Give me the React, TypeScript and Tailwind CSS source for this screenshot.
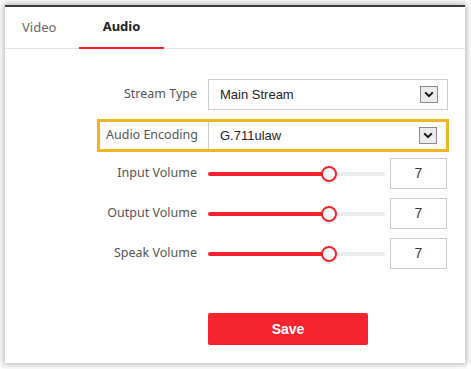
import { ReactNode } from 'react';

const labelFont = { fontFamily: '"Noto Sans", "Open Sans", sans-serif' };
const valueFont = { fontFamily: '"Liberation Sans", Arial, sans-serif' };

function Chevron() {
  return (
    <div className="w-[18px] h-[17px] border border-[#8a8a8a] bg-[#ececec] flex items-center justify-center">
      <svg width="10" height="7" viewBox="0 0 10 7">
        <path d="M1.2 1.4 L5 5.2 L8.8 1.4" fill="none" stroke="#111" strokeWidth="2" />
      </svg>
    </div>
  );
}

function Select({ value, className }: { value: string; className: string }) {
  return (
    <div className={`flex items-center justify-between pl-[11px] pr-[9px] text-[13px] text-[#222] ${className}`} style={valueFont}>
      <span>{value}</span>
      <Chevron />
    </div>
  );
}

function Label({ children }: { children: ReactNode }) {
  return (
    <div className="w-[192px] text-right text-[12.5px] text-[#555]" style={labelFont}>
      {children}
    </div>
  );
}

function VolumeRow({ label, value, top }: { label: string; value: number; top: string }) {
  return (
    <div className={`flex items-center h-[31px] ${top}`}>
      <Label>{label}</Label>
      <div className="ml-[11px] w-[177px] h-[4px] rounded-full bg-[#eeeeee] relative">
        <div className="h-full w-[121px] rounded-full bg-[#f5222d]" />
        <div className="absolute left-[113px] top-[-6px] w-[16px] h-[16px] rounded-full border-2 border-[#f5222d] bg-white" />
      </div>
      <div className="ml-[5px] w-[57px] h-[31px] border border-[#cccccc] flex items-center justify-center text-[14px] text-[#333]" style={valueFont}>
        {value}
      </div>
    </div>
  );
}

export default function App() {
  return (
    <div className="w-[471px] h-[369px] bg-white p-[5px] pb-[6px]">
      <div className="w-[460px] h-[358px] bg-white border-t-2 border-[#3c3c3c] shadow-[0_0_6px_2px_rgba(0,0,0,0.25)] flex flex-col">
        <div className="h-[42px] flex border-b border-[#e3e3e3] text-[13px]" style={labelFont}>
          <div className="pl-[17px] w-[74px] flex items-center text-[#666]">Video</div>
          <div className="w-[85px] flex items-center justify-center font-bold text-[#222] border-b-2 border-[#f5222d] mb-[-1px]">Audio</div>
        </div>

        <div className="flex items-center h-[31px] mt-[30px]">
          <Label>Stream Type</Label>
          <Select value="Main Stream" className="ml-[11px] w-[240px] h-[31px] border border-[#cccccc]" />
        </div>

        <div className="ml-[92px] mt-[9px] w-[352px] h-[33px] border-[3px] border-[#f1b51f] flex items-center">
          <div className="flex-1 text-right pr-[10px] text-[12.5px] text-[#555]" style={labelFont}>Audio Encoding</div>
          <Select value="G.711ulaw" className="w-[238px] h-full border-l border-[#cccccc]" />
        </div>

        <VolumeRow label="Input Volume" value={7} top="mt-[6px]" />
        <VolumeRow label="Output Volume" value={7} top="mt-[9px]" />
        <VolumeRow label="Speak Volume" value={7} top="mt-[9px]" />

        <div className="mt-[44px] ml-[203px]">
          <button className="w-[160px] h-[32px] rounded-[2px] bg-[#f5242f] text-white text-[14px] font-bold" style={valueFont}>
            Save
          </button>
        </div>
      </div>
    </div>
  );
}
